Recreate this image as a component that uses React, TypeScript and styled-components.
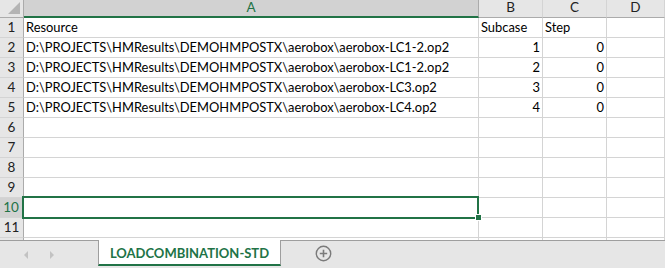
import React from 'react';
import styled, { createGlobalStyle } from 'styled-components';

const GRID = '#d4d4d4';
const HEAD_LINE = '#ababab';
const GREEN = '#217346';

const GlobalStyle = createGlobalStyle`
  html, body { margin: 0; padding: 0; background: #fff; }
  body { font-family: Lato, "Liberation Sans", sans-serif; }
`;

const Sheet = styled.div`
  width: 665px;
  height: 268px;
  overflow: hidden;
  display: flex;
  flex-direction: column;
`;

const Grid = styled.div`
  height: 240px;
  overflow: hidden;
  display: grid;
  grid-template-columns: 24px 455px 64px 64px 1fr;
  grid-auto-rows: 20px;
  grid-template-rows: 18px;
  font-size: 12.9px;
  color: #000;
`;

const Corner = styled.div`
  position: relative;
  background: #e6e6e6;
  border-right: 1px solid ${HEAD_LINE};
  border-bottom: 1px solid ${HEAD_LINE};
  &::after {
    content: '';
    position: absolute;
    right: 3px;
    bottom: 3px;
    width: 0;
    height: 0;
    border-left: 12px solid transparent;
    border-bottom: 12px solid #b4b4b4;
  }
`;

const ColHead = styled.div<{ $active?: boolean }>`
  display: flex;
  align-items: center;
  justify-content: center;
  background: ${(p) => (p.$active ? '#d2d2d2' : '#e6e6e6')};
  color: ${(p) => (p.$active ? GREEN : '#222')};
  border-right: 1px solid ${(p) => (p.$active ? HEAD_LINE : GRID)};
  border-bottom: ${(p) => (p.$active ? `2px solid ${GREEN}` : `1px solid ${HEAD_LINE}`)};
  font-size: 13.5px;
  line-height: 1;
  padding-bottom: ${(p) => (p.$active ? '0' : '1px')};
`;

const RowHead = styled.div<{ $active?: boolean }>`
  display: flex;
  align-items: center;
  justify-content: center;
  background: ${(p) => (p.$active ? '#d2d2d2' : '#e6e6e6')};
  color: ${(p) => (p.$active ? GREEN : '#222')};
  border-right: ${(p) => (p.$active ? `2px solid ${GREEN}` : `1px solid ${HEAD_LINE}`)};
  border-bottom: 1px solid ${GRID};
  font-size: 13.5px;
  line-height: 1;
`;

const Cell = styled.div<{ $num?: boolean; $selected?: boolean }>`
  position: relative;
  display: flex;
  align-items: flex-end;
  justify-content: ${(p) => (p.$num ? 'flex-end' : 'flex-start')};
  padding: 0 2px 2px 2px;
  border-right: 1px solid ${GRID};
  border-bottom: 1px solid ${GRID};
  white-space: nowrap;
  line-height: 16px;
  ${(p) =>
    p.$selected &&
    `
    &::before {
      content: '';
      position: absolute;
      left: -2px;
      top: -2px;
      right: -1px;
      bottom: -2px;
      border: 2px solid ${GREEN};
      pointer-events: none;
      z-index: 1;
    }
    &::after {
      content: '';
      position: absolute;
      right: -4px;
      bottom: -4px;
      width: 5px;
      height: 5px;
      background: ${GREEN};
      border: 1px solid #fff;
      z-index: 2;
    }
  `}
`;

const TabBar = styled.div`
  flex: 1;
  display: flex;
  align-items: stretch;
  background: #e6e6e6;
  border-top: 1px solid #9e9e9e;
`;

const Nav = styled.div`
  width: 98px;
  display: flex;
  align-items: center;
  padding-left: 24px;
  gap: 22px;
  box-sizing: border-box;
`;

const Arrow = styled.span<{ $dir: 'left' | 'right' }>`
  width: 0;
  height: 0;
  border-top: 4px solid transparent;
  border-bottom: 4px solid transparent;
  ${(p) => (p.$dir === 'left' ? 'border-right: 4px solid #c2c2c2;' : 'border-left: 4px solid #c2c2c2;')}
`;

const Tab = styled.div`
  margin-top: -1px;
  height: 23px;
  width: 181px;
  box-sizing: content-box;
  display: flex;
  align-items: center;
  justify-content: center;
  background: #fff;
  border-left: 1px solid #9e9e9e;
  border-right: 1px solid #9e9e9e;
  border-bottom: 2px solid ${GREEN};
  color: ${GREEN};
  font-weight: 700;
  font-size: 13px;
  padding-top: 1px;
`;

const AddButton = styled.div`
  margin-left: 34px;
  display: flex;
  align-items: center;
  padding-bottom: 3px;
`;

const rows: [string, string, string][] = [
  ['Resource', 'Subcase', 'Step'],
  ['D:\\PROJECTS\\HMResults\\DEMOHMPOSTX\\aerobox\\aerobox-LC1-2.op2', '1', '0'],
  ['D:\\PROJECTS\\HMResults\\DEMOHMPOSTX\\aerobox\\aerobox-LC1-2.op2', '2', '0'],
  ['D:\\PROJECTS\\HMResults\\DEMOHMPOSTX\\aerobox\\aerobox-LC3.op2', '3', '0'],
  ['D:\\PROJECTS\\HMResults\\DEMOHMPOSTX\\aerobox\\aerobox-LC4.op2', '4', '0'],
];

const SELECTED_ROW = 10;
const VISIBLE_ROWS = 11;

export default function App() {
  // one extra row so the gridlines run down to the tab bar
  const body = Array.from({ length: VISIBLE_ROWS + 1 }, (_, i) => {
    const n = i + 1;
    const data = rows[i];
    const active = n === SELECTED_ROW;
    const isHeader = n === 1;
    return (
      <React.Fragment key={n}>
        <RowHead $active={active}>{n <= VISIBLE_ROWS ? n : ''}</RowHead>
        <Cell $selected={active}>{data?.[0]}</Cell>
        <Cell $num={!isHeader}>{data?.[1]}</Cell>
        <Cell $num={!isHeader}>{data?.[2]}</Cell>
        <Cell />
      </React.Fragment>
    );
  });

  return (
    <>
      <GlobalStyle />
      <Sheet>
        <Grid>
          <Corner />
          <ColHead $active>A</ColHead>
          <ColHead>B</ColHead>
          <ColHead>C</ColHead>
          <ColHead>D</ColHead>
          {body}
        </Grid>
        <TabBar>
          <Nav>
            <Arrow $dir="left" />
            <Arrow $dir="right" />
          </Nav>
          <Tab>LOADCOMBINATION-STD</Tab>
          <AddButton>
            <svg width="17" height="17" viewBox="0 0 17 17">
              <circle cx="8.5" cy="8.5" r="7.2" fill="none" stroke="#7a7a7a" strokeWidth="1.4" />
              <path d="M8.5 4.8v7.4M4.8 8.5h7.4" stroke="#7a7a7a" strokeWidth="1.6" />
            </svg>
          </AddButton>
        </TabBar>
      </Sheet>
    </>
  );
}
